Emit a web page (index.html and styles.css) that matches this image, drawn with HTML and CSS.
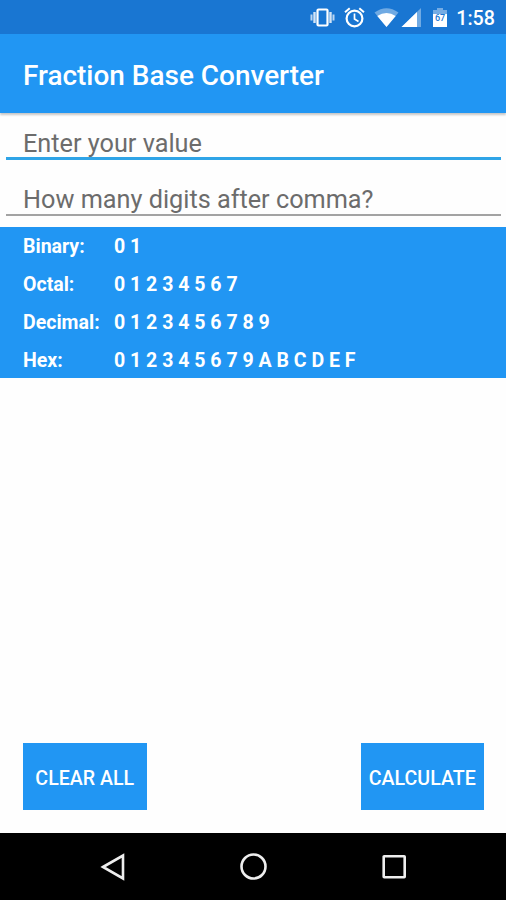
FILE: index.html
```html
<!DOCTYPE html>
<html lang="en">
<head>
<meta charset="utf-8">
<title>Fraction Base Converter</title>
<link rel="stylesheet" href="styles.css">
</head>
<body>
<div class="screen">
  <div class="status">
    <svg class="status-icons" viewBox="0 0 140 34" width="140" height="34" fill="#fff">
      <g fill="none" stroke="#fff" stroke-width="2">
        <rect x="7.500" y="9.500" width="10" height="16" rx="1" stroke-width="2.200"/>
        <path d="M4.500 12v11M20.500 12v11" stroke-width="2.400" stroke-opacity=".8"/>
        <path d="M1.500 14.500v6M23.500 14.500v6" stroke-opacity=".7"/>
        <circle cx="44.500" cy="18.500" r="7.900" stroke-width="2.200"/>
        <path d="M44.500 13.500v5.500l4 2.500" stroke-width="1.700"/>
        <path d="M35 12.300l4.700-4M54 12.300l-4.700-4"/>
      </g>
      <path d="M64.500 12.500q12-8.500 24 0L76.500 27z" fill-opacity=".38"/>
      <path d="M67.300 16q9.200-6 18.400 0L76.500 27z"/>
      <path d="M111 8v19H91.500z" fill-opacity=".38"/>
      <path d="M107 12v15H91.500z"/>
      <path d="M127 8h6v2h4v5h-14v-5h4z" fill-opacity=".4"/>
      <path d="M123 14h14v13h-14z"/>
      <text class="battery" x="130" y="21">67</text>
    </svg>
    <span class="clock">1:58</span>
  </div>
  <header class="bar"><h1 class="title">Fraction Base Converter</h1></header>
  <main class="content">
    <div class="field field-active"><span>Enter your value</span></div>
    <div class="field"><span>How many digits after comma?</span></div>
    <div class="table">
      <div class="row"><span>Binary:</span><span>0 1</span></div>
      <div class="row"><span>Octal:</span><span>0 1 2 3 4 5 6 7</span></div>
      <div class="row"><span>Decimal:</span><span>0 1 2 3 4 5 6 7 8 9</span></div>
      <div class="row"><span>Hex:</span><span>0 1 2 3 4 5 6 7 9 A B C D E F</span></div>
    </div>
    <div class="actions">
      <button class="btn">CLEAR ALL</button>
      <button class="btn">CALCULATE</button>
    </div>
  </main>
  <nav class="nav">
    <svg viewBox="0 0 28 28" width="28" height="28"><path d="M3 14L23 2.500v23z"/></svg>
    <svg viewBox="0 0 28 28" width="28" height="28"><circle cx="13.500" cy="13.500" r="12"/></svg>
    <svg viewBox="0 0 28 28" width="28" height="28"><rect x="3.700" y="3.200" width="21" height="21" rx=".5"/></svg>
  </nav>
</div>
</body>
</html>
```
FILE: styles.css
```css
* { box-sizing: border-box; }
body {
  margin: 0;
  background: #fefefe;
  font-family: Roboto, "Liberation Sans", sans-serif;
}
.screen {
  width: 506px;
  height: 900px;
  display: flex;
  flex-direction: column;
  overflow: hidden;
}
.status {
  height: 34px;
  flex: none;
  background: #1976d2;
  color: #fff;
  display: flex;
  justify-content: flex-end;
  padding-right: 11px;
}
.status-icons { margin-right: 6px; }
.battery {
  font-size: 9px;
  font-weight: 500;
  fill: #1976d2;
  text-anchor: middle;
}
.clock {
  font-size: 19.700px;
  font-weight: 500;
  line-height: 38px;
}
.bar {
  height: 79px;
  flex: none;
  background: #2196f3;
  box-shadow: 0 2px 2px rgba(0, 0, 0, .22);
  display: flex;
  align-items: center;
  padding: 3px 0 0 23px;
}
.title {
  margin: 0;
  color: #fff;
  font-size: 27.950px;
  font-weight: 500;
  white-space: nowrap;
}
.content {
  flex: 1;
  display: flex;
  flex-direction: column;
}
.field {
  height: 56px;
  margin: 0 5px 0 6px;
  padding-left: 17px;
  border-bottom: 2px solid #a3a3a3;
  color: #6c6c6c;
  font-size: 25.250px;
  line-height: 28px;
  display: flex;
  align-items: flex-end;
  white-space: nowrap;
}
.field-active {
  height: 47px;
  border-bottom: 3px solid #2fa4e7;
  line-height: 26px;
}
.table {
  margin-top: 11px;
  height: 151px;
  padding-top: 1px;
  background: #2196f3;
  color: #fff;
  font-size: 19.550px;
  font-weight: 700;
}
.row {
  display: grid;
  grid-template-columns: 91px 1fr;
  padding-left: 23px;
  height: 38px;
  line-height: 38px;
  white-space: nowrap;
}
.actions {
  margin-top: auto;
  display: flex;
  justify-content: space-between;
  padding: 0 22px 23px 23px;
}
.btn {
  width: 123.500px;
  height: 67px;
  border: 0;
  padding: 3px 0 0;
  background: #2196f3;
  color: #fff;
  font: 500 19.600px Roboto, sans-serif;
}
.nav {
  height: 67px;
  flex: none;
  background: #000;
  display: flex;
  justify-content: space-between;
  align-items: center;
  padding: 0 98px 0 100px;
}
.nav svg {
  fill: none;
  stroke: #eee;
  stroke-width: 2.600;
}
```
